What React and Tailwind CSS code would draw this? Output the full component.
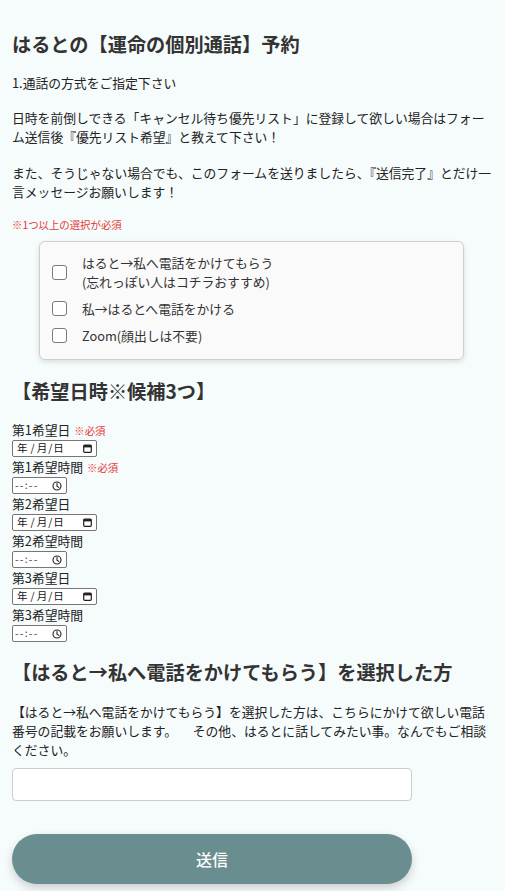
import React from "react";

function CalendarIcon() {
  return (
    <svg width="9" height="9" viewBox="0 0 9 9" className="block">
      <rect x="0.7" y="1.2" width="7.6" height="7.1" rx="1" fill="none" stroke="#1f1f1f" strokeWidth="1.2" />
      <rect x="0.7" y="1.2" width="7.6" height="2.2" fill="#1f1f1f" />
    </svg>
  );
}

function ClockIcon() {
  return (
    <svg width="10" height="10" viewBox="0 0 10 10" className="block">
      <circle cx="5" cy="5" r="4" fill="none" stroke="#1f1f1f" strokeWidth="1.1" />
      <path d="M5 2.6V5.2L6.8 6.4" fill="none" stroke="#1f1f1f" strokeWidth="1.1" strokeLinecap="round" />
    </svg>
  );
}

function DateBox() {
  return (
    <div className="flex h-[17px] w-[85px] items-center rounded-[2px] border border-[#767676] bg-white pl-[3px] pr-[4px] text-[10.5px] leading-none text-[#111]">
      <span className="ml-[1px]">年</span>
      <span className="ml-[3px]">/</span>
      <span className="ml-[2px]">月</span>
      <span className="ml-[1px]">/</span>
      <span className="ml-[1px]">日</span>
      <span className="ml-auto">
        <CalendarIcon />
      </span>
    </div>
  );
}

function TimeBox() {
  return (
    <div className="flex h-[17px] w-[55px] items-center rounded-[2px] border border-[#767676] bg-white pl-[2px] pr-[4px] text-[10.5px] leading-none text-[#444]">
      <span className="tracking-[1.2px]">--:--</span>
      <span className="ml-auto">
        <ClockIcon />
      </span>
    </div>
  );
}

function Label({ children, required }) {
  return (
    <div className="h-[20px] text-[12.8px] leading-[20px] text-[#222]">
      {children}
      {required && <span className="ml-[4px] text-[10.4px] leading-none text-[#e53935]">※必須</span>}
    </div>
  );
}

function Check({ children }) {
  return (
    <label className="flex items-center">
      <span className="h-[15px] w-[15px] shrink-0 rounded-[3px] border-[1.5px] border-[#7a7a7a] bg-white" />
      <span className="ml-[15px] text-[12.8px] leading-[19px] text-[#333]">{children}</span>
    </label>
  );
}

export default function App() {
  return (
    <div className='min-h-screen bg-[#f6fbfc] px-3 pt-[30px] pb-4 text-[#333] font-[family-name:"Noto_Sans_CJK_JP",sans-serif]'>
      <h1 className="text-[19.2px] font-bold leading-[28px] text-[#333]">はるとの【運命の個別通話】予約</h1>

      <p className="mt-[15px] text-[12.8px] leading-[19px] text-[#222]">1.通話の方式をご指定下さい</p>

      <p className="mt-[16px] whitespace-nowrap text-[12.8px] leading-[19px] text-[#222]">
        日時を前倒しできる「キャンセル待ち優先リスト」に登録して欲しい場合はフォー
        <br />
        ム送信後『優先リスト希望』と教えて下さい！
      </p>

      <p className="mt-[17px] whitespace-nowrap text-[12.8px] leading-[19px] text-[#222]">
        また、そうじゃない場合でも、このフォームを送りましたら、『送信完了』とだけ一
        <br />
        言メッセージお願いします！
      </p>

      <p className="mt-[16px] text-[10.4px] leading-[15px] text-[#e53935]">※1つ以上の選択が必須</p>

      <div className="ml-[27px] mt-[9px] flex w-[425px] flex-col gap-[8px] rounded-[6px] border border-[#cfcfcf] bg-[#fafafa] pb-[14px] pl-[12px] pt-[11px] shadow-[0_2px_5px_rgba(0,0,0,0.12)]">
        <Check>
          はると→私へ電話をかけてもらう
          <br />
          (忘れっぽい人はコチラおすすめ)
        </Check>
        <Check>私→はるとへ電話をかける</Check>
        <Check>Zoom(顔出しは不要)</Check>
      </div>

      <h2 className="mt-[17px] text-[19.2px] font-bold leading-[28px] text-[#333]">【希望日時※候補3つ】</h2>

      <div className="mt-[15px] flex flex-col">
        <Label required>第1希望日</Label>
        <DateBox />
        <Label required>第1希望時間</Label>
        <TimeBox />
        <Label>第2希望日</Label>
        <DateBox />
        <Label>第2希望時間</Label>
        <TimeBox />
        <Label>第3希望日</Label>
        <DateBox />
        <Label>第3希望時間</Label>
        <TimeBox />
      </div>

      <h2 className="mt-[16px] text-[19.2px] font-bold leading-[28px] text-[#333]">【はると→私へ電話をかけてもらう】を選択した方</h2>

      <p className="mt-[16px] whitespace-nowrap text-[12.8px] leading-[19px] text-[#222]">
        【はると→私へ電話をかけてもらう】を選択した方は、こちらにかけて欲しい電話
        <br />
        番号の記載をお願いします。{"\u3000\u2002 "}その他、はるとに話してみたい事。なんでもご相談
        <br />
        ください。
      </p>

      <input
        type="text"
        className="mt-[9px] block h-[33px] w-[400px] rounded-[4px] border border-[#cccccc] bg-white px-2 text-[13px] outline-none"
      />

      <button
        type="button"
        className="mt-[33px] flex h-[50px] w-[400px] items-center justify-center rounded-full bg-[#6a8e90] text-[16px] font-medium text-white shadow-[0_4px_10px_rgba(0,0,0,0.18)]"
      >
        送信
      </button>
    </div>
  );
}
